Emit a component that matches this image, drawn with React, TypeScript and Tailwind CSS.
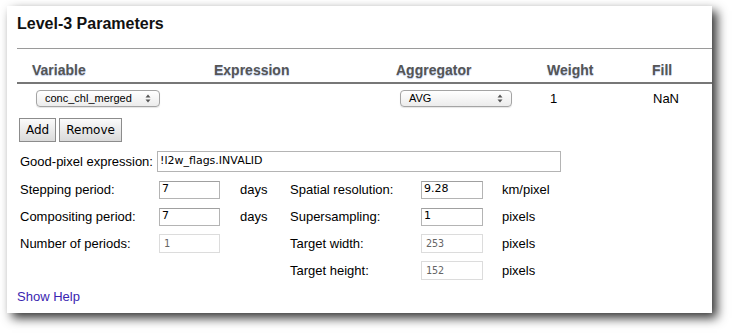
import React from "react";

const cols = ["w-[182px] pl-[15px]", "w-[182px] pl-[15px]", "w-[151px] pl-[15px]", "w-[105px] pl-[15px]", "flex-1 pl-[15px]"];

const Arrows = () => (
  <svg width="6" height="9" viewBox="0 0 6 9" className="shrink-0">
    <path d="M3 0.5 L5.5 3.5 H0.5 Z" fill="#555" />
    <path d="M3 8.5 L5.5 5.5 H0.5 Z" fill="#555" />
  </svg>
);

const Select = ({ value, w }: { value: string; w: string }) => (
  <div
    className={`${w} h-[17px] flex items-center justify-between pl-[8px] pr-[8px] rounded-[4px] border border-[#a4a4a4] bg-gradient-to-b from-white to-[#ececec] text-[11px] leading-[15px] text-black shadow-[0_1px_1px_rgba(0,0,0,0.1)]`}
  >
    <span>{value}</span>
    <Arrows />
  </div>
);

const Field = ({ value, w, disabled }: { value: string; w: string; disabled?: boolean }) =>
  disabled ? (
    <div className={`${w} h-[19px] flex items-center pl-[4px] border border-[#dcdcdc] bg-white font-['DejaVu_Sans_Mono',monospace] text-[10px] text-[#666]`}>
      {value}
    </div>
  ) : (
    <div className={`${w} h-[18px] flex items-center pl-[2px] border border-[#b4b4b4] border-t-[#a0a0a0] bg-white font-['DejaVu_Sans',sans-serif] text-[11px] text-black`}>
      {value}
    </div>
  );

const Btn = ({ label }: { label: string }) => (
  <div className="h-[24px] px-[6px] flex items-center border border-[#8c8c8c] bg-gradient-to-b from-[#fbfbfb] to-[#dadada] font-['DejaVu_Sans',sans-serif] text-[12px] text-black">
    {label}
  </div>
);

export default function App() {
  const rows: [string, string, string, string, string, string, boolean, boolean][] = [
    ["Stepping period:", "7", "days", "Spatial resolution:", "9.28", "km/pixel", false, false],
    ["Compositing period:", "7", "days", "Supersampling:", "1", "pixels", false, false],
    ["Number of periods:", "1", "", "Target width:", "253", "pixels", true, true],
    ["", "", "", "Target height:", "152", "pixels", true, true],
  ];

  return (
    <div className="w-[734px] h-[335px] bg-white overflow-hidden font-['Liberation_Sans',Arial,sans-serif] text-[13px] text-black">
      <div className="mt-[6px] ml-[7px] w-[705px] h-[307px] bg-white overflow-hidden pl-[10px] pt-[8px] shadow-[5px_5px_10px_rgba(0,0,0,0.8)]">
        <h1 className="text-[16px] leading-[20px] font-bold text-[#111]">Level-3 Parameters</h1>
        <div className="mt-[14px] border-t border-[#9a9a9a]" />

        {/* parameter table */}
        <div className="flex h-[35px] pt-[10px] items-center border-b-2 border-[#777] text-[14px] font-bold text-[#555] [text-shadow:0_1px_1px_#b8c8ea]">
          {["Variable", "Expression", "Aggregator", "Weight", "Fill"].map((h, i) => (
            <div key={h} className={cols[i]}>{h}</div>
          ))}
        </div>
        <div className="flex h-[29px] items-center">
          <div className="w-[182px] pl-[19px]">
            <Select value="conc_chl_merged" w="w-[124px]" />
          </div>
          <div className="w-[182px]" />
          <div className="w-[151px] pl-[19px]">
            <Select value="AVG" w="w-[112px]" />
          </div>
          <div className="w-[105px] pl-[18px]">1</div>
          <div className="flex-1 pl-[16px]">NaN</div>
        </div>

        <div className="mt-[5px] ml-[2px] flex gap-[3px]">
          <Btn label="Add" />
          <Btn label="Remove" />
        </div>

        <div className="mt-[9px] ml-[3px] flex items-center">
          <div className="w-[137px]">Good-pixel expression:</div>
          <div className="w-[404px] h-[21px] flex items-center pl-[2px] border border-[#b4b4b4] bg-white font-['DejaVu_Sans',sans-serif] text-[11px]">
            !l2w_flags.INVALID
          </div>
        </div>

        <div className="mt-[4px] ml-[3px] grid grid-cols-[139px_81px_50px_131px_81px_1fr] auto-rows-[27px] items-center">
          {rows.map((r, i) => (
            <React.Fragment key={i}>
              <div>{r[0]}</div>
              <div>{r[1] && <Field value={r[1]} w="w-[61px]" disabled={r[6]} />}</div>
              <div>{r[2]}</div>
              <div>{r[3]}</div>
              <div><Field value={r[4]} w="w-[62px]" disabled={r[7]} /></div>
              <div>{r[5]}</div>
            </React.Fragment>
          ))}
        </div>

        <div className="mt-[5px] leading-[16px] text-[#3a25b0]">Show Help</div>
      </div>
    </div>
  );
}
